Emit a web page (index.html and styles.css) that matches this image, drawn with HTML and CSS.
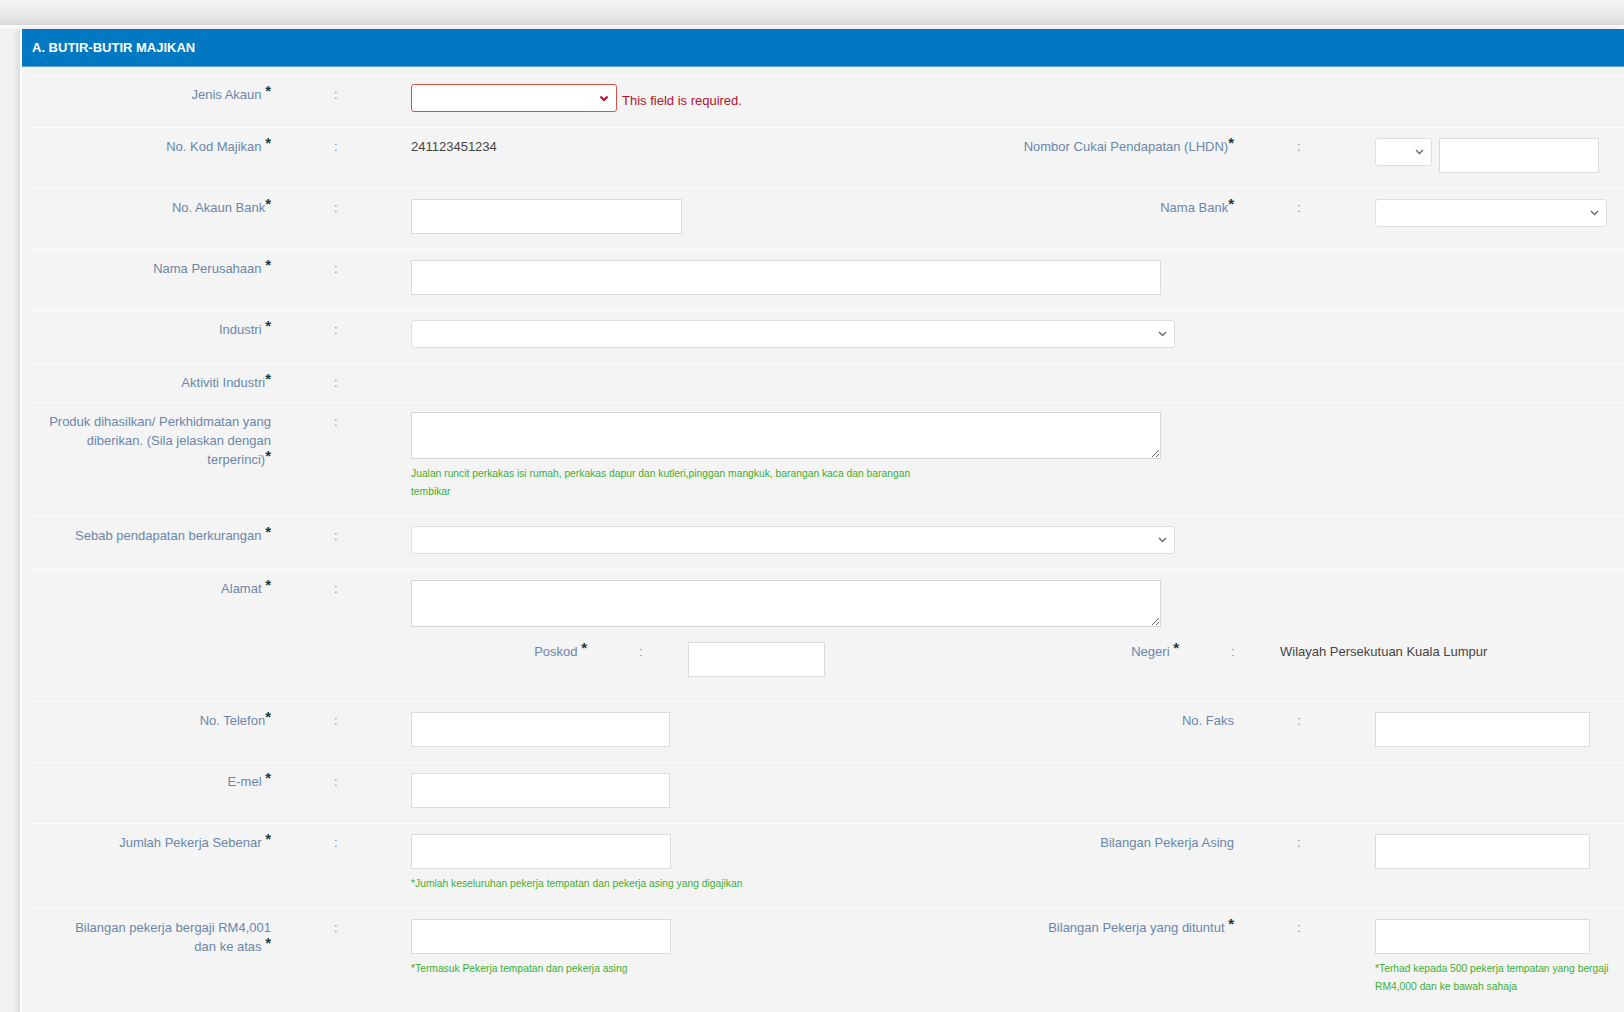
FILE: index.html
```html
<!DOCTYPE html>
<html lang="ms">
<head>
  <meta charset="UTF-8">
  <title>Butir-butir Majikan</title>
  <link rel="stylesheet" href="styles.css">
</head>
<body>
  <div class="topbar"></div>
  <div class="page">
    <div class="panel">
      <div class="panel-head">A. BUTIR-BUTIR MAJIKAN</div>
      <div class="panel-body">

        <!-- Jenis akaun -->
        <div class="row">
          <div class="lbl">Jenis Akaun <span class="req">*</span></div>
          <div class="colon">:</div>
          <div class="ctl span-all inline">
            <div class="select select-error w-206">
              <svg width="10" height="7" viewBox="0 0 10 7"><path d="M1.5 1.5 L5 5 L8.5 1.5" fill="none" stroke="#b3122e" stroke-width="2"/></svg>
            </div>
            <span class="error">This field is required.</span>
          </div>
        </div>

        <div class="row">
          <div class="lbl">No. Kod Majikan <span class="req">*</span></div>
          <div class="colon">:</div>
          <div class="ctl"><div class="value">241123451234</div></div>
          <div class="lbl">Nombor Cukai Pendapatan (LHDN)<span class="req">*</span></div>
          <div class="colon">:</div>
          <div class="ctl inline">
            <div class="select w-57">
              <svg width="9" height="6" viewBox="0 0 9 6"><path d="M1 1 L4.5 4.5 L8 1" fill="none" stroke="#666" stroke-width="1.3"/></svg>
            </div>
            <input class="input w-160" type="text">
          </div>
        </div>

        <div class="row">
          <div class="lbl">No. Akaun Bank<span class="req">*</span></div>
          <div class="colon">:</div>
          <div class="ctl"><input class="input w-271" type="text"></div>
          <div class="lbl">Nama Bank<span class="req">*</span></div>
          <div class="colon">:</div>
          <div class="ctl">
            <div class="select w-232 sel-low">
              <svg width="9" height="6" viewBox="0 0 9 6"><path d="M1 1 L4.5 4.5 L8 1" fill="none" stroke="#666" stroke-width="1.3"/></svg>
            </div>
          </div>
        </div>

        <div class="row">
          <div class="lbl">Nama Perusahaan <span class="req">*</span></div>
          <div class="colon">:</div>
          <div class="ctl span-all"><input class="input w-750" type="text"></div>
        </div>

        <div class="row">
          <div class="lbl">Industri <span class="req">*</span></div>
          <div class="colon">:</div>
          <div class="ctl span-all">
            <div class="select w-764">
              <svg width="9" height="6" viewBox="0 0 9 6"><path d="M1 1 L4.5 4.5 L8 1" fill="none" stroke="#666" stroke-width="1.3"/></svg>
            </div>
          </div>
        </div>

        <div class="row row-plain">
          <div class="lbl">Aktiviti Industri<span class="req">*</span></div>
          <div class="colon">:</div>
          <div class="ctl span-all"></div>
        </div>

        <div class="row">
          <div class="lbl">Produk dihasilkan/ Perkhidmatan yang diberikan. (Sila jelaskan dengan terperinci)<span class="req">*</span></div>
          <div class="colon">:</div>
          <div class="ctl span-all">
            <textarea class="area w-750"></textarea>
            <div class="help help-wide">Jualan runcit perkakas isi rumah, perkakas dapur dan kutleri,pinggan mangkuk, barangan kaca dan barangan tembikar</div>
          </div>
        </div>

        <div class="row">
          <div class="lbl">Sebab pendapatan berkurangan <span class="req">*</span></div>
          <div class="colon">:</div>
          <div class="ctl span-all">
            <div class="select w-764">
              <svg width="9" height="6" viewBox="0 0 9 6"><path d="M1 1 L4.5 4.5 L8 1" fill="none" stroke="#666" stroke-width="1.3"/></svg>
            </div>
          </div>
        </div>

        <div class="row">
          <div class="lbl">Alamat <span class="req">*</span></div>
          <div class="colon">:</div>
          <div class="ctl span-all">
            <textarea class="area area-addr w-750"></textarea>
            <div class="subrow">
              <div class="lbl">Poskod <span class="req">*</span></div>
              <div class="colon sub">:</div>
              <div><input class="input w-137" type="text"></div>
              <div class="lbl">Negeri <span class="req">*</span></div>
              <div class="colon sub">:</div>
              <div class="value">Wilayah Persekutuan Kuala Lumpur</div>
            </div>
          </div>
        </div>

        <div class="row">
          <div class="lbl">No. Telefon<span class="req">*</span></div>
          <div class="colon">:</div>
          <div class="ctl"><input class="input w-259" type="text"></div>
          <div class="lbl">No. Faks</div>
          <div class="colon">:</div>
          <div class="ctl"><input class="input w-215" type="text"></div>
        </div>

        <div class="row">
          <div class="lbl">E-mel <span class="req">*</span></div>
          <div class="colon">:</div>
          <div class="ctl"><input class="input w-259" type="text"></div>
        </div>

        <div class="row">
          <div class="lbl">Jumlah Pekerja Sebenar <span class="req">*</span></div>
          <div class="colon">:</div>
          <div class="ctl">
            <input class="input w-260" type="text">
            <div class="help">*Jumlah keseluruhan pekerja tempatan dan pekerja asing yang digajikan</div>
          </div>
          <div class="lbl">Bilangan Pekerja Asing</div>
          <div class="colon">:</div>
          <div class="ctl"><input class="input w-215" type="text"></div>
        </div>

        <div class="row">
          <div class="lbl">Bilangan pekerja bergaji RM4,001<br>dan ke atas <span class="req">*</span></div>
          <div class="colon">:</div>
          <div class="ctl">
            <input class="input w-260" type="text">
            <div class="help">*Termasuk Pekerja tempatan dan pekerja asing</div>
          </div>
          <div class="lbl">Bilangan Pekerja yang dituntut <span class="req">*</span></div>
          <div class="colon">:</div>
          <div class="ctl">
            <input class="input w-215" type="text">
            <div class="help">*Terhad kepada 500 pekerja tempatan yang bergaji RM4,000 dan ke bawah sahaja</div>
          </div>
        </div>

      </div>
    </div>
  </div>
</body>
</html>
```

FILE: styles.css
```css
html, body {
  margin: 0;
  overflow: hidden;
}
body {
  font-family: "Liberation Sans", Arial, sans-serif;
  font-size: 13px;
  background: #f1f1f1;
  color: #444;
}
.topbar {
  height: 25px;
  background: linear-gradient(to bottom, #f4f4f4, #ebebeb 55%, #d8d8d8);
}
.page {
  border-top: 4px solid #fafafa;
}
.panel {
  margin-left: 20px;
  border-left: 2px solid #fbfbfb;
  background: #f4f4f4;
  box-shadow: -3px 0 6px rgba(0,0,0,0.10);
  min-height: 990px;
}
.panel-head {
  height: 37px;
  line-height: 37px;
  padding-left: 10px;
  background: #0079c2;
  border-bottom: 1px solid #5b9fd6;
  color: #fff;
  font-weight: bold;
  font-size: 13px;
}
.panel-body {
  padding: 8px 0 0 7px;
}

/* baris borang */
.row {
  display: grid;
  grid-template-columns: 242px 140px 581px 242px 141px 1fr;
  align-items: start;
  border-top: 1px solid #fdfdfd;
  padding: 8px 0 15px;
}
.row-plain {
  padding-bottom: 10px;
}
.lbl {
  text-align: right;
  color: #6a87ab;
  line-height: 19px;
  padding-top: 1px;
}
.req {
  color: #173b38;
  font-weight: bold;
  font-size: 15px;
  line-height: 0;
  vertical-align: 3px;
}
.colon {
  color: #8a8a8a;
  padding-left: 63px;
  line-height: 19px;
  padding-top: 1px;
}
.colon.sub {
  padding-left: 52px;
}
.ctl {
  min-width: 0;
}
.span-all {
  grid-column: 3 / -1;
}
.inline {
  display: flex;
  align-items: flex-start;
  gap: 7px;
}
.value {
  color: #444;
  line-height: 19px;
  padding-top: 1px;
}
.error {
  color: #b3122e;
  font-size: 13px;
  margin: 9px 0 0 -2px;
}

/* kawalan */
.input {
  display: block;
  box-sizing: border-box;
  height: 35px;
  margin: 2px 0 0;
  padding: 4px 8px;
  background: #fff;
  border: 1px solid #dcdcdc;
  border-radius: 0;
  font: inherit;
}
.select {
  box-sizing: border-box;
  height: 28px;
  margin-top: 1px;
  background: #fff;
  border: 1px solid #dedede;
  border-radius: 3px;
  display: flex;
  align-items: center;
  justify-content: flex-end;
  padding-right: 7px;
}
.inline .select, .sel-low {
  margin-top: 2px;
}
.select-error {
  border-color: #d2504d;
}
.inline .select-error {
  margin-top: 0;
}
.area {
  display: block;
  box-sizing: border-box;
  height: 47px;
  margin: 1px 0 0;
  background: #fff;
  border: 1px solid #d6d6d6;
  resize: vertical;
  font: inherit;
}
.area-addr {
  margin-top: 2px;
}
.help {
  color: #3eae33;
  font-size: 10.3px;
  line-height: 18px;
  margin-top: 6px;
}
.help-wide {
  max-width: 520px;
}
.subrow {
  display: grid;
  grid-template-columns: 176px 101px 315px 176px 101px 1fr;
  align-items: start;
  margin-top: 15px;
  padding-bottom: 9px;
}
.subrow .lbl, .subrow .colon, .subrow .value {
  padding-top: 0;
}
.subrow .input {
  margin-top: 0;
}

.w-57 { width: 57px; }
.w-137 { width: 137px; }
.w-160 { width: 160px; }
.w-206 { width: 206px; }
.w-215 { width: 215px; }
.w-232 { width: 232px; }
.w-259 { width: 259px; }
.w-260 { width: 260px; }
.w-271 { width: 271px; }
.w-750 { width: 750px; }
.w-764 { width: 764px; }
```
